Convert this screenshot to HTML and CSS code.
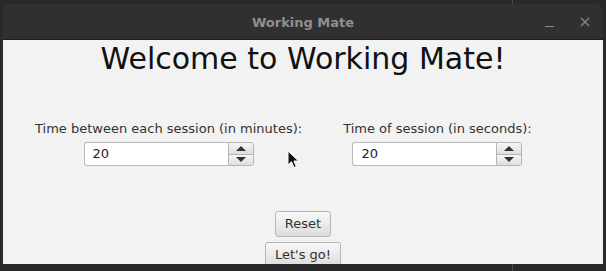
FILE: index.html
```html
<!DOCTYPE html>
<html lang="en">
  <head>
    <meta charset="UTF-8" />
    <meta name="viewport" content="width=device-width, initial-scale=1.0" />
    <title>Working Mate</title>
    <link rel="stylesheet" href="styles.css">
  </head>
  <body>
    <div class="window">
      <div class="titlebar">
        <span class="title">Working Mate</span>
        <div class="controls">
          <span class="ctl min"></span>
          <svg class="ctl close" width="10" height="10" viewBox="0 0 10 10">
            <path d="M1 1 L9 9 M9 1 L1 9" stroke="#8a8a8a" stroke-width="1.3"/>
          </svg>
        </div>
      </div>
      <div class="content">
        <h1 class="welcome">Welcome to Working Mate!</h1>
        <div class="settings">
          <div class="field">
            <label class="label">Time between each session (in minutes):</label>
            <div class="spinner">
              <div class="spin-text">20</div>
              <div class="spin-btns">
                <div class="spin-btn"><span class="arrow up"></span></div>
                <div class="spin-btn"><span class="arrow down"></span></div>
              </div>
            </div>
          </div>
          <div class="field">
            <label class="label">Time of session (in seconds):</label>
            <div class="spinner">
              <div class="spin-text">20</div>
              <div class="spin-btns">
                <div class="spin-btn"><span class="arrow up"></span></div>
                <div class="spin-btn"><span class="arrow down"></span></div>
              </div>
            </div>
          </div>
        </div>
        <div class="actions">
          <button class="btn btn-reset">Reset</button>
          <button class="btn btn-go">Let's go!</button>
        </div>
        <svg class="cursor" width="13" height="19" viewBox="0 0 13 19">
          <path d="M1 1 L1 15 L4.5 11.8 L7 17.5 L9.3 16.5 L6.9 11 L11.5 11 Z" fill="#111" stroke="#fff" stroke-width="1"/>
        </svg>
      </div>
    </div>
  </body>
</html>
```

FILE: styles.css
```css
* {
  margin: 0px;
  padding: 0px;
  box-sizing: border-box;
}
body {
  width: 606px;
  height: 271px;
  overflow: hidden;
  background: linear-gradient(to right, transparent 512px, #4a4a4a 512px, #4a4a4a 513px, transparent 513px), #292929;
  padding: 4px 0 0 3px;
  font-family: "DejaVu Sans", sans-serif;
}
.window {
  width: 600px;
  height: 260px;
  display: flex;
  flex-direction: column;
}
.titlebar {
  flex-shrink: 0;
  height: 36px;
  background-color: #312f2f;
  border-radius: 7px 7px 0 0;
  display: flex;
  align-items: center;
  justify-content: center;
  position: relative;
  border-bottom: 1px solid #1e1e1e;
}
.title {
  color: #8f8f8f;
  font-weight: bold;
  font-size: 13px;
  padding-top: 1px;
}
.controls {
  position: absolute;
  right: 13px;
  top: 12px;
  display: flex;
  align-items: center;
  gap: 26px;
}
.ctl.min {
  display: block;
  width: 9px;
  height: 1px;
  margin-top: 10px;
  background-color: #8a8a8a;
}
.content {
  flex: 1;
  min-height: 0;
  overflow: hidden;
  background-color: #f2f2f2;
  display: flex;
  flex-direction: column;
  align-items: center;
  position: relative;
}
.welcome {
  font-weight: normal;
  font-size: 30px;
  line-height: 36px;
  margin-top: 1px;
  color: #111;
}
.settings {
  align-self: flex-start;
  display: flex;
  gap: 41px;
  margin-top: 44px;
  padding-left: 32px;
}
.field {
  display: flex;
  flex-direction: column;
  align-items: center;
  gap: 5px;
}
.label {
  font-size: 13px;
  line-height: 16px;
  color: #333;
}
.spinner {
  display: flex;
  width: 170px;
  height: 24px;
}
.spin-text {
  flex: 1;
  background-color: #fff;
  border: 1px solid #b9b9b9;
  border-right: none;
  border-radius: 3px 0 0 3px;
  font-size: 13px;
  color: #222;
  padding-left: 8px;
  line-height: 22px;
}
.spin-btns {
  width: 26px;
  display: flex;
  flex-direction: column;
  border: 1px solid #b5b5b5;
  border-radius: 0 3px 3px 0;
  overflow: hidden;
}
.spin-btn {
  flex: 1;
  display: flex;
  align-items: center;
  justify-content: center;
  background: linear-gradient(#f6f6f6, #dedede);
}
.spin-btn + .spin-btn {
  border-top: 1px solid #b5b5b5;
}
.arrow {
  width: 0;
  height: 0;
  border-left: 5px solid transparent;
  border-right: 5px solid transparent;
}
.arrow.up {
  border-bottom: 5px solid #333;
}
.arrow.down {
  border-top: 5px solid #333;
}
.actions {
  margin-top: 45px;
  display: flex;
  flex-direction: column;
  align-items: center;
  gap: 5px;
}
.btn {
  all: unset;
  font-family: "DejaVu Sans", sans-serif;
  font-size: 13px;
  color: #333;
  height: 24px;
  line-height: 22px;
  padding: 0 9px;
  border: 1px solid #b5b5b5;
  border-radius: 3px;
  background: linear-gradient(#f8f8f8, #dddddd);
}
.btn-go {
  height: 23px;
  line-height: 21px;
}
.cursor {
  position: absolute;
  left: 284px;
  top: 110px;
}
```
